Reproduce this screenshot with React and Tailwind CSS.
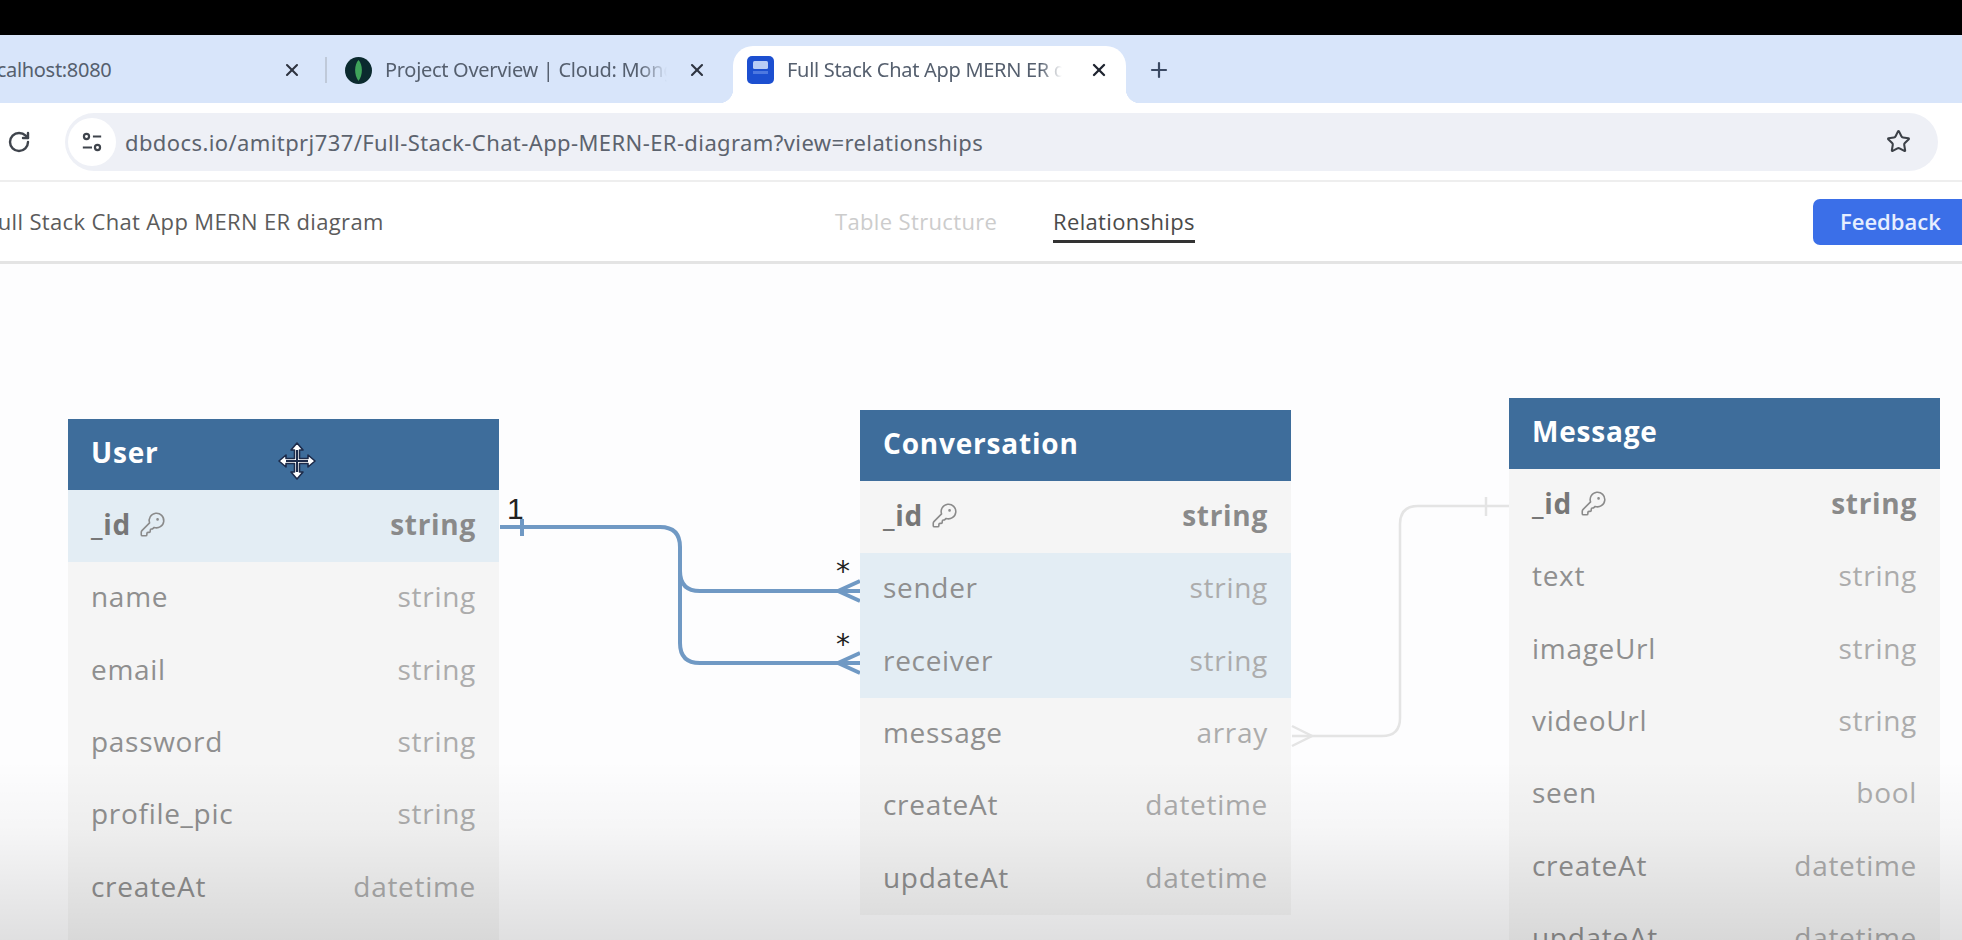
import React from "react";
import { KeyRound, Plus, RotateCw, Star, X } from "lucide-react";

const userFields = [
  { name: "_id", type: "string", pk: true, active: true },
  { name: "name", type: "string" },
  { name: "email", type: "string" },
  { name: "password", type: "string" },
  { name: "profile_pic", type: "string" },
  { name: "createAt", type: "datetime" },
  { name: "updateAt", type: "datetime" },
];

const conversationFields = [
  { name: "_id", type: "string", pk: true },
  { name: "sender", type: "string", active: true },
  { name: "receiver", type: "string", active: true },
  { name: "message", type: "array" },
  { name: "createAt", type: "datetime" },
  { name: "updateAt", type: "datetime" },
];

const messageFields = [
  { name: "_id", type: "string", pk: true },
  { name: "text", type: "string" },
  { name: "imageUrl", type: "string" },
  { name: "videoUrl", type: "string" },
  { name: "seen", type: "bool" },
  { name: "createAt", type: "datetime" },
  { name: "updateAt", type: "datetime" },
];

function DbTable({ title, fields, className }) {
  return (
    <div className={`absolute w-[431px] bg-[#f5f5f5] ${className}`}>
      <div className="h-[71px] bg-[#3e6d9b] pl-[23px] pt-[15px] text-[28px] leading-[36px] font-bold tracking-[0.8px] text-white">
        {title}
      </div>
      {fields.map((f) => (
        <div
          key={f.name}
          className={`flex h-[72.3px] items-center justify-between px-[23px] pb-[4px] text-[28px] tracking-[0.7px] ${
            f.active ? "bg-[#e3edf4]" : ""
          } ${f.pk ? "font-bold text-[#777777]" : "text-[#8f8f8f]"}`}
        >
          <div className="flex items-center gap-[8px]">
            <span>{f.name}</span>
            {f.pk && <KeyRound className="h-[27px] w-[27px] text-[#8a8a8a]" strokeWidth={1.4} />}
          </div>
          <span className={f.pk ? "text-[#8a8a8a]" : "text-[#acacac]"}>{f.type}</span>
        </div>
      ))}
    </div>
  );
}

function Connectors() {
  return (
    <svg className="absolute inset-0 h-full w-full" viewBox="0 0 1962 676" fill="none">
      <g stroke="#7099c4" strokeWidth="4">
        <path d="M500 263H660Q680 263 680 283V379Q680 399 700 399H860" />
        <path d="M680 283V307Q680 327 700 327H860" />
        <path d="M522 255V272" />
        <path d="M838 327L860 317M838 327L860 337" />
        <path d="M838 399L860 389M838 399L860 409" />
      </g>
      <g stroke="#e4e4e4" strokeWidth="2.5">
        <path d="M1292 472H1382Q1400 472 1400 454V260Q1400 242 1418 242H1509" />
        <path d="M1486 233V252" />
        <path d="M1292 462L1312 472L1292 482" />
      </g>
    </svg>
  );
}

function MoveCursor() {
  return (
    <svg className="absolute left-[278px] top-[178px] h-[38px] w-[38px]" viewBox="0 0 38 38">
      <path
        d="M19 1L25 8H21.5V16.5H30V13L37 19L30 25V21.5H21.5V30H25L19 37L13 30H16.5V21.5H8V25L1 19L8 13V16.5H16.5V8H13Z"
        fill="white"
        stroke="#1d2b4a"
        strokeWidth="1.6"
        strokeLinejoin="round"
      />
      <path d="M19 8V30M8 19H30" stroke="#1d2b4a" strokeWidth="2" />
    </svg>
  );
}

function App() {
  return (
    <div className="flex h-[940px] w-full flex-col overflow-hidden bg-white font-['Open_Sans',sans-serif]">
      <div className="h-[35px] shrink-0 bg-black" />

      {/* tab strip */}
      <div className="flex h-[68px] shrink-0 items-center overflow-hidden bg-[#d8e5fa] pt-[2px] font-['Noto_Sans',sans-serif] text-[20px] tracking-[-0.3px] text-[#555f6e]">
        <span className="ml-[-20px] w-[302px] shrink-0">localhost:8080</span>
        <X className="h-[20px] w-[20px] shrink-0 text-[#2e3440]" strokeWidth={2.5} />
        <div className="ml-[23px] h-[26px] w-[2px] shrink-0 bg-[#bfc9d9]" />
        <svg className="ml-[18px] h-[27px] w-[27px] shrink-0" viewBox="0 0 27 27">
          <circle cx="13.5" cy="13.5" r="13.5" fill="#0b2a2e" />
          <path d="M13.5 3C18 8 18 18 13.5 24C9 18 9 8 13.5 3Z" fill="#3fa45a" />
        </svg>
        <span className="ml-[13px] w-[282px] shrink-0 overflow-hidden whitespace-nowrap [mask-image:linear-gradient(to_right,black_90%,transparent)]">
          Project Overview | Cloud: MongoDB
        </span>
        <X className="ml-[20px] h-[20px] w-[20px] shrink-0 text-[#2e3440]" strokeWidth={2.5} />
        <div className="relative ml-[26px] flex h-[57px] w-[393px] shrink-0 items-center self-end rounded-t-[20px] bg-white pb-[10px] pl-[14px]">
          <div className="absolute bottom-0 left-[-14px] h-[14px] w-[14px] bg-[radial-gradient(circle_at_0_0,transparent_14px,white_14.5px)]" />
          <div className="absolute bottom-0 right-[-14px] h-[14px] w-[14px] bg-[radial-gradient(circle_at_100%_0,transparent_14px,white_14.5px)]" />
          <svg className="h-[28px] w-[28px] shrink-0" viewBox="0 0 28 28">
            <rect width="27" height="28" rx="5" fill="#1c4fd0" />
            <rect x="6" y="5" width="15" height="8" rx="1.5" fill="#b9cdf5" />
            <rect x="6" y="15" width="15" height="3" fill="#4d78e0" />
          </svg>
          <span className="ml-[12px] w-[275px] shrink-0 overflow-hidden whitespace-nowrap [mask-image:linear-gradient(to_right,black_92%,transparent)]">
            Full Stack Chat App MERN ER diagram
          </span>
          <X className="ml-[27px] h-[20px] w-[20px] shrink-0 text-[#1f2430]" strokeWidth={2.8} />
        </div>
        <Plus className="ml-[21px] h-[24px] w-[24px] shrink-0 text-[#3b4a63]" strokeWidth={2.2} />
      </div>

      {/* address row */}
      <div className="flex h-[79px] shrink-0 items-center border-b-2 border-[#eeeeee] pr-[24px]">
        <RotateCw className="ml-[7px] h-[24px] w-[24px] shrink-0 text-[#3f444c]" strokeWidth={2.4} />
        <div className="ml-[34px] flex h-[58px] flex-1 items-center rounded-full bg-[#eef0f6] pl-[3px] pr-[27px]">
          <div className="flex h-[48px] w-[48px] shrink-0 items-center justify-center rounded-full bg-white">
            <svg className="h-[22px] w-[22px]" viewBox="0 0 24 24" fill="none" stroke="#3f444c" strokeWidth="2.4">
              <circle cx="6" cy="6" r="2.8" />
              <path d="M13 6H22M2 18H12" />
              <circle cx="18" cy="18" r="2.8" />
            </svg>
          </div>
          <span className="ml-[9px] flex-1 pt-[1px] font-['Noto_Sans',sans-serif] text-[22px] tracking-[0.4px] text-[#5c636e]">
            dbdocs.io/amitprj737/Full-Stack-Chat-App-MERN-ER-diagram?view=relationships
          </span>
          <Star className="h-[25px] w-[25px] shrink-0 text-[#3c4148]" strokeWidth={2} />
        </div>
      </div>

      {/* page nav */}
      <div className="flex h-[82px] shrink-0 items-center border-b-[3px] border-[#e4e4e4] text-[22px] font-medium tracking-[0.35px]">
        <span className="ml-[-14px] w-[849px] shrink-0 text-[#5b5b5b]">Full Stack Chat App MERN ER diagram</span>
        <span className="w-[218px] shrink-0 text-[#cccccc]">Table Structure</span>
        <div className="relative shrink-0 text-[#4a4a4a]">
          Relationships
          <div className="absolute inset-x-0 bottom-[-5px] h-[3px] bg-[#333333]" />
        </div>
        <button className="ml-auto flex h-[46px] w-[149px] items-center rounded-l-[7px] bg-[#3b6fe8] pl-[27px] font-semibold tracking-normal text-[#e6eeff]">
          Feedback
        </button>
      </div>

      {/* diagram canvas */}
      <div className="relative flex-1 overflow-hidden bg-[#fdfdfe]">
        <Connectors />
        <DbTable title="User" fields={userFields} className="left-[68px] top-[155px]" />
        <DbTable title="Conversation" fields={conversationFields} className="left-[860px] top-[146px]" />
        <DbTable title="Message" fields={messageFields} className="left-[1509px] top-[134px]" />
        <div className="absolute left-[507px] top-[230px] font-['Liberation_Sans',sans-serif] text-[30px] leading-none text-[#222222]">
          1
        </div>
        <div className="absolute left-[836px] top-[294px] font-['DejaVu_Sans',sans-serif] text-[28px] leading-none text-[#222222]">
          *
        </div>
        <div className="absolute left-[836px] top-[367px] font-['DejaVu_Sans',sans-serif] text-[28px] leading-none text-[#222222]">
          *
        </div>
        <MoveCursor />
        <div className="pointer-events-none absolute inset-x-0 bottom-0 h-[180px] bg-linear-to-b from-transparent via-[#00000008] via-40% to-[#0000001e]" />
      </div>
    </div>
  );
}

export default App;
